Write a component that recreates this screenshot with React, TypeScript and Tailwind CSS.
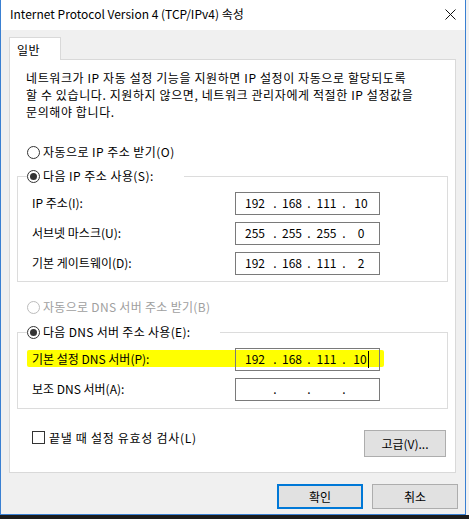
const Radio = ({ checked, disabled }: { checked?: boolean; disabled?: boolean }) => (
  <span
    className={`flex h-[13px] w-[13px] shrink-0 items-center justify-center rounded-full border bg-white ${
      disabled ? "border-[#bcbcbc]" : "border-[#333333]"
    }`}
  >
    {checked && <span className="h-[7px] w-[7px] rounded-full bg-[#333333]" />}
  </span>
);

const IpBox = ({ values, cursor, clear }: { values?: string[]; cursor?: boolean; clear?: boolean }) => {
  const v = values ?? ["", "", "", ""];
  return (
    <div
      className={`flex h-[23px] w-[145px] items-center border border-[#7a7a7a] pl-px text-[12px] ${
        clear ? "bg-transparent" : "bg-white"
      }`}
    >
      <span className="w-[36px] text-center">{v[0]}</span>
      <span className="w-[4px] text-center">.</span>
      <span className="w-[30px] text-center">{v[1]}</span>
      <span className="w-[4px] text-center">.</span>
      <span className="w-[31px] text-center">{v[2]}</span>
      <span className="w-[4px] text-center">.</span>
      <span className="flex w-[30px] items-center justify-center">
        {v[3]}
        {cursor && <span className="ml-px h-[17px] w-px bg-black" />}
      </span>
    </div>
  );
};

const Field = ({ label, children }: { label: string; children: React.ReactNode }) => (
  <div className="grid h-[30px] grid-cols-[203px_145px] items-center">
    <span>{label}</span>
    {children}
  </div>
);

export default function App() {
  return (
    <div className="flex h-[519px] w-[469px] flex-col bg-[#1c1c1c] font-['Noto_Sans_CJK_KR',sans-serif] text-[12px] text-black">
      <div className="flex">
        {/* window */}
        <div className="flex h-[515px] w-[466px] flex-col border-x border-b border-[#3a80d2] bg-[#f0f0f0]">
          {/* title bar */}
          <div className="flex h-[30px] items-center justify-between bg-white pl-[9px] pr-[9px]">
            <span className="pb-[2px] text-[12px]">Internet Protocol Version 4 (TCP/IPv4) 속성</span>
            <svg width="11" height="11" viewBox="0 0 11 11" className="mb-[2px]">
              <path d="M0.5 0.5 L10.5 10.5 M10.5 0.5 L0.5 10.5" stroke="#111" strokeWidth="1" />
            </svg>
          </div>

          {/* tab */}
          <div className="pl-[8px] pt-[7px]">
            <div className="relative z-10 flex h-[23px] w-[52px] items-center border-x border-t border-[#d9d9d9] bg-white pl-[7px] pt-[2px] tracking-[0.5px]">
              일반
            </div>
          </div>

          {/* panel */}
          <div className="-mt-px ml-[8px] flex h-[414px] w-[447px] flex-col border border-[#d9d9d9] bg-white">
            <p className="pl-[16px] pt-[9px] leading-[17px] tracking-[0.6px]">
              네트워크가 IP 자동 설정 기능을 지원하면 IP 설정이 자동으로 할당되도록
              <br />
              할 수 있습니다. 지원하지 않으면, 네트워크 관리자에게 적절한 IP 설정값을
              <br />
              문의해야 합니다.
            </p>

            <label className="ml-[17px] mt-[22px] flex h-[20px] items-center gap-[3px] tracking-[0.45px]">
              <Radio />
              자동으로 IP 주소 받기(O)
            </label>

            <fieldset className="ml-[7px] mt-[3px] w-[431px] border border-[#dcdcdc]">
              <legend className="ml-[9px] flex h-[22px] items-center gap-[3px] pr-[30px] tracking-[0.45px]">
                <Radio checked />
                다음 IP 주소 사용(S):
              </legend>
              <div className="pb-[3px] pl-[14px] pt-px">
                <Field label="IP 주소(I):">
                  <IpBox values={["192", "168", "111", "10"]} />
                </Field>
                <Field label="서브넷 마스크(U):">
                  <IpBox values={["255", "255", "255", "0"]} />
                </Field>
                <Field label="기본 게이트웨이(D):">
                  <IpBox values={["192", "168", "111", "2"]} />
                </Field>
              </div>
            </fieldset>

            <label className="ml-[17px] mt-[15px] flex h-[20px] items-center gap-[3px] tracking-[0.3px] text-[#a0a0a0]">
              <Radio disabled />
              자동으로 DNS 서버 주소 받기(B)
            </label>

            <fieldset className="ml-[7px] mt-[4px] w-[431px] border border-[#dcdcdc]">
              <legend className="ml-[9px] flex h-[22px] items-center gap-[3px] pr-[30px] tracking-[0.3px]">
                <Radio checked />
                다음 DNS 서버 주소 사용(E):
              </legend>
              <div className="pb-[4px] pl-[14px] pt-px">
                <div className="relative">
                  {/* highlighter mark */}
                  <span className="absolute left-[-5px] top-[6px] h-[17px] w-[357px] rounded-[2px] bg-[#ffff00]" />
                  <div className="relative">
                    <Field label="기본 설정 DNS 서버(P):">
                      <IpBox values={["192", "168", "111", "10"]} cursor clear />
                    </Field>
                  </div>
                </div>
                <Field label="보조 DNS 서버(A):">
                  <IpBox />
                </Field>
              </div>
            </fieldset>

            <div className="ml-[22px] mr-[9px] mt-[21px] flex items-start justify-between">
              <label className="mt-px flex h-[13px] items-center gap-[4px] tracking-[0.7px]">
                <span className="h-[13px] w-[13px] border border-[#333333] bg-white" />
                끝낼 때 설정 유효성 검사(L)
              </label>
              <button className="flex h-[27px] w-[82px] items-center justify-center border border-[#adadad] bg-[#e1e1e1]">
                고급(V)...
              </button>
            </div>
          </div>

          {/* dialog buttons */}
          <div className="mt-[11px] flex justify-end gap-[9px] pr-[7px]">
            <button className="flex h-[25px] w-[86px] items-center justify-center border-2 border-[#0078d7] bg-[#e1e1e1]">
              확인
            </button>
            <button className="flex h-[25px] w-[86px] items-center justify-center border border-[#adadad] bg-[#e1e1e1]">
              취소
            </button>
          </div>
        </div>
        <div className="h-[515px] flex-1 bg-[#f2f2f2]" />
      </div>
    </div>
  );
}
